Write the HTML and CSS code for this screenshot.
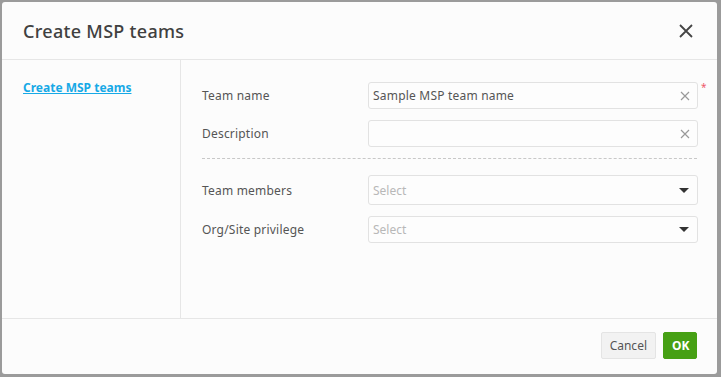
FILE: index.html
```html
<!DOCTYPE html>
<html>
<head>
    <meta charset="utf-8"/>
    <title>Create MSP teams</title>
    <link rel="stylesheet" href="styles.css">
</head>
<body>
<div class="modal">
    <div class="modal-head">
        <h1>Create MSP teams</h1>
        <span class="close">
            <svg width="14" height="14" viewBox="0 0 14 14"><path d="M1 1L13 13M13 1L1 13" stroke="#444" stroke-width="1.8" fill="none"/></svg>
        </span>
    </div>
    <div class="modal-body">
        <div class="side">
            <a href="#" class="side-link">Create MSP teams</a>
        </div>
        <div class="form">
            <div class="row">
                <label>Team name</label>
                <div class="field">
                    <span class="value">Sample MSP team name</span>
                    <svg class="clear" width="10" height="10" viewBox="0 0 10 10"><path d="M1 1L9 9M9 1L1 9" stroke="#999" stroke-width="1.2" fill="none"/></svg>
                </div>
                <span class="req">*</span>
            </div>
            <div class="row">
                <label>Description</label>
                <div class="field">
                    <span class="value"></span>
                    <svg class="clear" width="10" height="10" viewBox="0 0 10 10"><path d="M1 1L9 9M9 1L1 9" stroke="#999" stroke-width="1.2" fill="none"/></svg>
                </div>
                <span class="req"></span>
            </div>
            <div class="sep"></div>
            <div class="row">
                <label>Team members</label>
                <div class="field select tall">
                    <span class="placeholder">Select</span>
                    <span class="caret"></span>
                </div>
                <span class="req"></span>
            </div>
            <div class="row">
                <label>Org/Site privilege</label>
                <div class="field select">
                    <span class="placeholder">Select</span>
                    <span class="caret"></span>
                </div>
                <span class="req"></span>
            </div>
        </div>
    </div>
    <div class="modal-foot">
        <button class="btn cancel">Cancel</button>
        <button class="btn ok">OK</button>
    </div>
</div>
</body>
</html>
```

FILE: styles.css
```css
* {
    margin: 0;
    padding: 0;
    box-sizing: border-box;
}

body {
    background: #9b9b9b;
    font-family: "Noto Sans", "Liberation Sans", sans-serif;
    width: 721px;
    height: 377px;
    overflow: hidden;
    padding: 2px 4px 3px 2px;
}

.modal {
    background: #fcfcfc;
    border-radius: 3px;
    height: 372px;
    display: flex;
    flex-direction: column;
}

.modal-head {
    height: 58px;
    border-bottom: 1px solid #e6e6e6;
    display: flex;
    align-items: center;
    justify-content: space-between;
    padding: 0 24px 0 21px;
}

.modal-head h1 {
    font-size: 18px;
    font-weight: 500;
    color: #404040;
    letter-spacing: 0.3px;
}

.close {
    display: flex;
}

.modal-body {
    flex: 1;
    display: flex;
    border-bottom: 1px solid #e6e6e6;
}

.side {
    width: 179px;
    flex-shrink: 0;
    border-right: 1px solid #e6e6e6;
    padding: 15px 0 0 21px;
}

.side-link {
    font-size: 12px;
    font-weight: 700;
    color: #17a9e6;
}

.form {
    flex: 1;
    padding: 22px 0 0 21px;
}

.row {
    display: flex;
    align-items: center;
    margin-bottom: 11px;
}

.row label {
    width: 166px;
    flex-shrink: 0;
    font-size: 12px;
    color: #555;
    letter-spacing: 0.2px;
}

.field {
    width: 330px;
    flex-shrink: 0;
    height: 27px;
    border: 1px solid #e2e2e2;
    border-radius: 3px;
    background: #fdfdfd;
    display: flex;
    align-items: center;
    justify-content: space-between;
    padding: 0 7px 0 4px;
    font-size: 12px;
}

.field.tall {
    height: 30px;
}

.value {
    color: #555;
    letter-spacing: 0.2px;
}

.placeholder {
    color: #b8b8b8;
}

.caret {
    width: 0;
    height: 0;
    border-left: 5px solid transparent;
    border-right: 5px solid transparent;
    border-top: 5px solid #333;
    margin-right: 1px;
}

.req {
    width: 8px;
    align-self: flex-start;
    color: #ee5a6a;
    font-size: 10px;
    line-height: 10px;
    margin-left: 3px;
}

.sep {
    width: 495px;
    border-top: 1px dashed #c8c8c8;
    margin: 4px 0 16px 0;
}

.modal-foot {
    height: 55px;
    display: flex;
    align-items: center;
    justify-content: flex-end;
    gap: 7px;
    padding: 0 20px 2px 0;
}

.btn {
    height: 27px;
    border-radius: 2px;
    font-family: "Noto Sans", "Liberation Sans", sans-serif;
    font-size: 12px;
    padding: 0 8px;
    border: 1px solid #e4e4e4;
}

.cancel {
    background: #f2f2f2;
    color: #555;
}

.ok {
    background: #46a014;
    border-color: #46a014;
    color: #fff;
    font-weight: 700;
    width: 34px;
}
```
